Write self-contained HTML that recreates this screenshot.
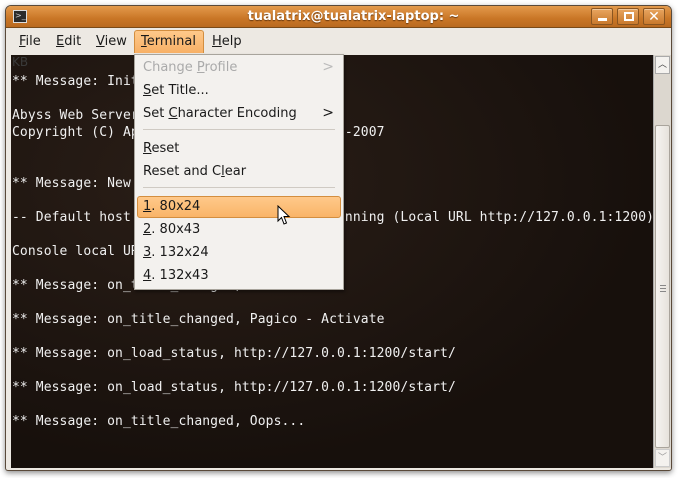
<!DOCTYPE html>
<html><head><meta charset="utf-8"><style>
*{margin:0;padding:0;box-sizing:border-box}
body{width:681px;height:478px;background:#fff;position:relative;overflow:hidden;font-family:"DejaVu Sans","Liberation Sans",sans-serif}
.win{position:absolute;left:5px;top:5px;width:667px;height:466px;border:1px solid #5a4a3a;border-radius:6px 6px 3px 3px;background:#ede9e3;box-shadow:0 2px 6px rgba(0,0,0,.45);overflow:hidden}
.title{position:absolute;left:0;top:0;width:100%;height:22px;background:linear-gradient(#e39a4c,#c97626 60%,#b96a20);border-bottom:1px solid #7a4a18}
.title .t{position:absolute;left:0;right:0;top:3px;text-align:center;color:#fff;font-weight:bold;font-size:13px;text-shadow:0 1px 1px #6a3a10;padding-left:30px}
.ticon{position:absolute;left:7px;top:4px;width:14px;height:13px;background:#2b2b2b;border:1px solid #ddd;color:#ccc;font-size:8px;line-height:10px;padding-left:1px}
.btn{position:absolute;top:2px;width:22px;height:17px;border:1px solid #8a5520;border-radius:2px;background:linear-gradient(#e8a560,#c9792c);box-shadow:inset 0 1px 0 rgba(255,255,255,.4)}
.menubar{position:absolute;left:0;top:22px;width:100%;height:27px;background:#ede9e3;font-size:13px;color:#1a1a1a}
.menubar span{position:absolute;top:6px}
.term{position:absolute;left:5px;top:49px;width:642px;height:413px;background:radial-gradient(ellipse at 30% 30%,#2a1e17,#17100c 70%);overflow:hidden}
pre{position:absolute;left:1px;top:18px;font-family:"DejaVu Sans Mono","Liberation Mono",monospace;font-size:13px;letter-spacing:.1px;line-height:17px;color:#f0f0f0}
.sb{position:absolute;left:647px;top:49px;width:18px;height:413px;background:#dcd7cf;border-left:1px solid #aaa}
.thumb{position:absolute;left:1px;top:70px;width:15px;height:323px;background:linear-gradient(90deg,#f6f4f1,#e6e2dc);border:1px solid #a9a49c;border-radius:2px}
.menu{position:absolute;left:134px;top:54px;width:210px;height:236px;background:#f3f1ee;border:1px solid #a8a49c;box-shadow:1px 2px 3px rgba(0,0,0,.4);font-size:13px;color:#1a1a1a}
.menu div.i{position:absolute;left:8px}
.sep{position:absolute;left:8px;right:8px;height:1px;background:#cfcac3}
.hl{position:absolute;left:2px;right:2px;top:141px;height:22px;background:linear-gradient(#ffc98a,#f9b468);border:1px solid #d38e3f;border-radius:3px}
.arr{position:absolute;right:9px;font-size:14px}
u{text-decoration:underline}
</style></head><body>
<div class="win">
 <div class="title"><div class="ticon">&gt;_</div><div class="t">tualatrix@tualatrix-laptop: ~</div>
  <div class="btn" style="left:585px"><div style="position:absolute;left:6px;top:9px;width:9px;height:3px;background:#fff"></div></div>
  <div class="btn" style="left:611px"><div style="position:absolute;left:6px;top:3px;width:10px;height:9px;border:2px solid #fff"></div></div>
  <div class="btn" style="left:637px;color:#fff;font-weight:bold;font-size:14px;text-align:center;line-height:16px">✕</div>
 </div>
 <div class="menubar">
  <span style="left:13px"><u>F</u>ile</span><span style="left:50px"><u>E</u>dit</span><span style="left:90px"><u>V</u>iew</span>
  <div style="position:absolute;left:128px;top:2px;width:70px;height:23px;background:linear-gradient(#ffc98a,#f7b066);border:1px solid #d38e3f;border-bottom:none;border-radius:3px 3px 0 0"></div>
  <span style="left:135px"><u>T</u>erminal</span><span style="left:206px"><u>H</u>elp</span>
 </div>
 <div class="term"><div style="position:absolute;left:1px;top:0;color:#3a3a3a;font-family:'DejaVu Sans',sans-serif;font-size:12px">KB</div><pre>** Message: Initializing Pagico library.

Abyss Web Server X1 version 2.6
Copyright (C) Aprelium Technologies - 2001-2007


** Message: New window

-- Default host 'localhost:1200' is now running (Local URL http://127.0.0.1:1200)

Console local URL: http://127.0.0.1:9999

** Message: on_title_changed,

** Message: on_title_changed, Pagico - Activate

** Message: on_load_status, http://127.0.0.1:1200/start/

** Message: on_load_status, http://127.0.0.1:1200/start/

** Message: on_title_changed, Oops...</pre></div>
 <div class="sb">
  <div style="position:absolute;left:1px;top:1px;width:15px;height:18px;background:#f4f2ef;border:1px solid #aaa;font-size:9px;text-align:center;line-height:16px;color:#444">︿</div>
  <div class="thumb"><div style="position:absolute;left:4px;top:159px;width:6px;height:7px;border-top:1px solid #888;border-bottom:1px solid #888"><div style="margin-top:2px;height:1px;background:#888"></div></div></div>
  <div style="position:absolute;left:1px;top:394px;width:15px;height:18px;background:#f4f2ef;border:1px solid #ccc;font-size:9px;text-align:center;line-height:16px;color:#999">﹀</div>
 </div>
</div>
<div class="menu">
 <div class="i" style="top:5px;color:#aaa">Change <u>P</u>rofile</div><div class="arr" style="top:4px;color:#bbb">&gt;</div>
 <div class="i" style="top:28px"><u>S</u>et Title...</div>
 <div class="i" style="top:51px">Set <u>C</u>haracter Encoding</div><div class="arr" style="top:50px">&gt;</div>
 <div class="sep" style="top:74px"></div>
 <div class="i" style="top:86px"><u>R</u>eset</div>
 <div class="i" style="top:109px">Reset and C<u>l</u>ear</div>
 <div class="sep" style="top:132px"></div>
 <div class="hl"></div>
 <div class="i" style="top:144px"><u>1</u>. 80x24</div>
 <div class="i" style="top:167px"><u>2</u>. 80x43</div>
 <div class="i" style="top:190px"><u>3</u>. 132x24</div>
 <div class="i" style="top:213px"><u>4</u>. 132x43</div>
</div>
<svg style="position:absolute;left:277px;top:205px" width="14" height="22" viewBox="0 0 14 22"><path d="M1 1 L1 16 L4.5 12.5 L7 19 L9.5 18 L7 11.5 L12 11.5 Z" fill="#fff" stroke="#000" stroke-width="1"/></svg>
</body></html>
